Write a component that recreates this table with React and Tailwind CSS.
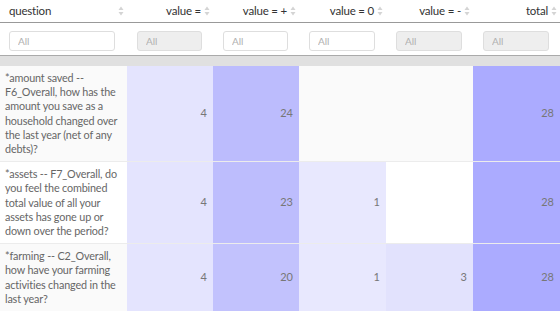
const cols = ["question", "value =", "value = +", "value = 0", "value = -", "total"];
const disabled = [false, true, false, false, true, true];

const rows = [
  {
    bg: "bg-[#fafafa]",
    lines: [
      "*amount saved --",
      "F6_Overall, how has the",
      "amount you save as a",
      "household changed over",
      "the last year (net of any",
      "debts)?",
    ],
    cells: [
      { v: 4, c: "bg-[#e4e4fe]" },
      { v: 24, c: "bg-[#bcbcfd]" },
      null,
      null,
      { v: 28, c: "bg-[#ababff]" },
    ],
  },
  {
    bg: "bg-white",
    lines: [
      "*assets -- F7_Overall, do",
      "you feel the combined",
      "total value of all your",
      "assets has gone up or",
      "down over the period?",
    ],
    cells: [
      { v: 4, c: "bg-[#e4e4fe]" },
      { v: 23, c: "bg-[#bdbdfd]" },
      { v: 1, c: "bg-[#e8e8fe]" },
      null,
      { v: 28, c: "bg-[#ababff]" },
    ],
  },
  {
    bg: "bg-[#fafafa]",
    lines: [
      "*farming -- C2_Overall,",
      "how have your farming",
      "activities changed in the",
      "last year?",
    ],
    cells: [
      { v: 4, c: "bg-[#e4e4fe]" },
      { v: 20, c: "bg-[#c2c2fd]" },
      { v: 1, c: "bg-[#e8e8fe]" },
      { v: 3, c: "bg-[#e2e2fd]" },
      { v: 28, c: "bg-[#ababff]" },
    ],
  },
];

const SortIcon = () => (
  <svg width="6" height="10" viewBox="0 0 6 10" className="shrink-0 ml-[3px]">
    <path d="M3 0.5 L5.5 4 H0.5 Z" fill="#d4d4d4" />
    <path d="M3 9.5 L5.5 6 H0.5 Z" fill="#d4d4d4" />
  </svg>
);

const grid = "grid grid-cols-[127px_86px_86px_87px_87px_87px]";

export default function App() {
  return (
    <div className="w-[560px] h-[311px] overflow-hidden bg-white text-[#555] font-['Lato',sans-serif]">
      {/* header */}
      <div className={`${grid} h-[23px] border-b border-[#999]`}>
        {cols.map((c, i) => (
          <div
            key={c}
            className={`flex items-center text-[11.5px] tracking-[-0.2px] text-[#333] ${
              i === 0 ? "justify-between pl-[9px] pr-[3px]" : "justify-end pr-[3px]"
            }`}
          >
            <span>{c}</span>
            <SortIcon />
          </div>
        ))}
      </div>

      {/* filters */}
      <div className={`${grid} h-[33px] border-b border-[#aaa] items-center`}>
        {cols.map((c, i) => (
          <div key={c} className={i === 0 ? "pl-[9px] pr-[12px]" : "pl-[10px] pr-[11px]"}>
            <input
              placeholder="All"
              disabled={disabled[i]}
              className={`w-full h-[20px] rounded-[3px] border border-[#dedede] px-[8px] text-[10px] placeholder:text-[#b0b0b0] outline-none ${
                disabled[i] ? "bg-[#eeeeee]" : "bg-white"
              }`}
            />
          </div>
        ))}
      </div>

      <div className="h-[10px] bg-[#e0e0e0]" />

      {rows.map((r, ri) => (
        <div key={ri} className={`${grid} border-b border-[#ececec]`}>
          <div className={`${r.bg} px-[5px] py-[5px] text-[10.8px] tracking-[-0.15px] leading-[14.2px] text-[#666]`}>
            {r.lines.map((l) => (
              <div key={l} className="whitespace-nowrap">
                {l}
              </div>
            ))}
          </div>
          {r.cells.map((cell, ci) => (
            <div
              key={ci}
              className={`flex items-center justify-end pr-[6px] text-[11px] text-[#777] ${
                cell ? cell.c : r.bg
              }`}
            >
              {cell ? cell.v : ""}
            </div>
          ))}
        </div>
      ))}
    </div>
  );
}
